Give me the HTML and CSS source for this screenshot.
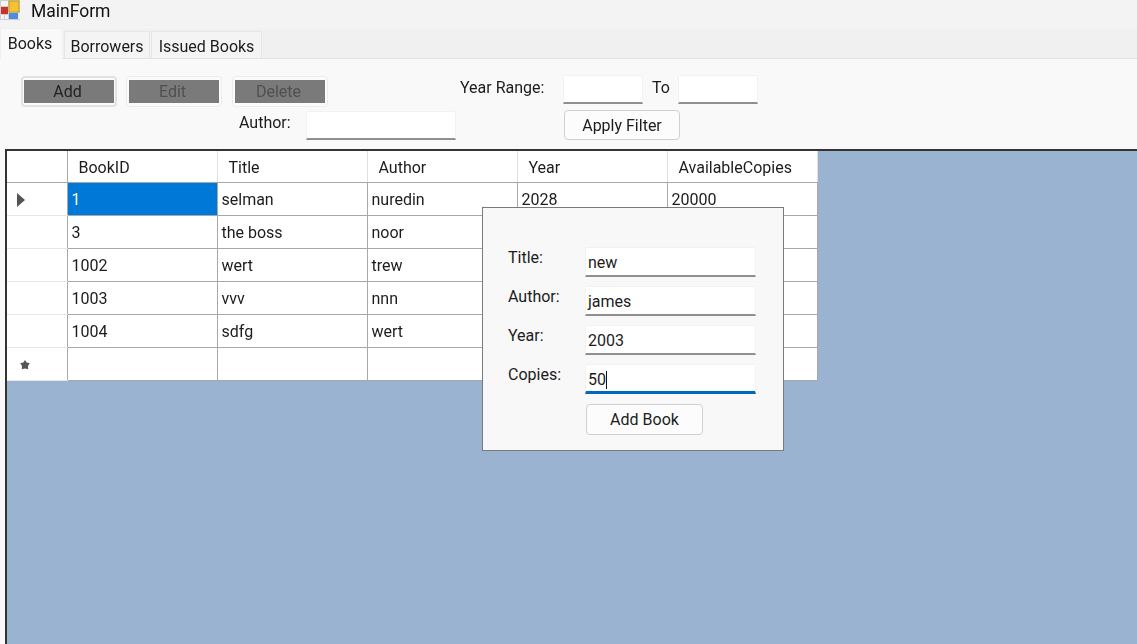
FILE: index.html
```html
<!DOCTYPE html>
<html lang="en">
<head>
  <meta charset="UTF-8" />
  <title>MainForm</title>
  <link rel="stylesheet" href="styles.css">
</head>
<body>
  <div class="titlebar">
    <svg class="app-icon" width="20" height="20" viewBox="0 0 20 20">
      <rect x="0" y="0" width="20" height="20" fill="#cfcfcf"/>
      <rect x="1" y="1" width="7" height="5" fill="#f4f4f4"/>
      <rect x="9" y="1" width="10" height="11" fill="#f6c22e" stroke="#c49a34" stroke-width="1"/>
      <rect x="1" y="7" width="7" height="7" fill="#c9322c"/>
      <rect x="9" y="13" width="9" height="6" fill="#4f8be0"/>
      <rect x="1" y="15" width="3" height="4" fill="#f4f4f4"/>
      <rect x="5" y="15" width="3" height="4" fill="#f4f4f4"/>
      <rect x="18" y="13" width="2" height="6" fill="#eeeeee"/>
    </svg>
    <span class="title-text">MainForm</span>
  </div>

  <div class="tabstrip">
    <div class="tab tab-active">Books</div>
    <div class="tab tab-borrowers">Borrowers</div>
    <div class="tab tab-issued">Issued Books</div>
  </div>

  <div class="toolbar">
    <div class="left-tools">
      <div class="action-row">
        <button class="action-btn action-default"><span>Add</span></button>
        <button class="action-btn"><span class="dim">Edit</span></button>
        <button class="action-btn"><span class="dim">Delete</span></button>
      </div>
      <div class="author-row">
        <label class="filter-label">Author:</label>
        <div class="field field-author"></div>
      </div>
    </div>
    <div class="right-tools">
      <div class="year-row">
        <label class="filter-label">Year Range:</label>
        <div class="field field-year"></div>
        <label class="filter-label to-label">To</label>
        <div class="field field-year"></div>
      </div>
      <button class="plain-btn apply-btn">Apply Filter</button>
    </div>
  </div>

  <div class="grid-area">
    <table class="books">
      <thead>
        <tr><th class="row-head"></th><th>BookID</th><th>Title</th><th>Author</th><th>Year</th><th>AvailableCopies</th></tr>
      </thead>
      <tbody>
        <tr>
          <td class="row-head"><svg width="8" height="14" viewBox="0 0 8 14"><path d="M0 0L8 7L0 14Z" fill="#555"/></svg></td>
          <td class="selected">1</td><td>selman</td><td>nuredin</td><td>2028</td><td>20000</td>
        </tr>
        <tr><td class="row-head"></td><td>3</td><td>the boss</td><td>noor</td><td></td><td></td></tr>
        <tr><td class="row-head"></td><td>1002</td><td>wert</td><td>trew</td><td></td><td></td></tr>
        <tr><td class="row-head"></td><td>1003</td><td>vvv</td><td>nnn</td><td></td><td></td></tr>
        <tr><td class="row-head"></td><td>1004</td><td>sdfg</td><td>wert</td><td></td><td></td></tr>
        <tr>
          <td class="row-head"><svg class="new-row" width="10" height="10" viewBox="0 0 9 9"><path d="M4.5 0L6 2.2L8.8 3L7.2 5.4L7.4 8.4L4.5 7.6L1.6 8.4L1.8 5.4L0.2 3L3 2.2Z" fill="#555"/></svg></td>
          <td></td><td></td><td></td><td></td><td></td>
        </tr>
      </tbody>
    </table>

    <div class="popup">
      <div class="popup-row">
        <label>Title:</label>
        <div class="field popup-field">new</div>
      </div>
      <div class="popup-row">
        <label>Author:</label>
        <div class="field popup-field">james</div>
      </div>
      <div class="popup-row">
        <label>Year:</label>
        <div class="field popup-field">2003</div>
      </div>
      <div class="popup-row">
        <label>Copies:</label>
        <div class="field popup-field focused">50<span class="caret"></span></div>
      </div>
      <button class="plain-btn add-book">Add Book</button>
    </div>
  </div>
</body>
</html>
```

FILE: styles.css
```css
* {
  box-sizing: border-box;
}
html, body {
  height: 100%;
}
body {
  margin: 0;
  background-color: #f9f9f9;
  color: #1c1c1c;
  font-family: Roboto, "Noto Sans", sans-serif;
  font-size: 16px;
  overflow: hidden;
  display: flex;
  flex-direction: column;
  filter: blur(0.35px);
}
button {
  font: inherit;
  color: inherit;
  padding: 0;
}

.titlebar {
  height: 29px;
  flex: none;
  background-color: #f3f3f3;
  display: flex;
  align-items: flex-start;
}
.app-icon {
  flex: none;
}
.title-text {
  margin-left: 11px;
  font-size: 17.5px;
  line-height: 22px;
  color: #111;
}

.tabstrip {
  height: 30px;
  flex: none;
  background-color: #f0f0f0;
  border-bottom: 1px solid #e2e2e2;
  display: flex;
  align-items: flex-end;
}
.tab {
  height: 27px;
  padding-top: 2px;
  line-height: 25px;
  text-align: center;
  background-color: #f4f4f4;
  border: 1px solid #e6e6e6;
  border-bottom: none;
}
.tab-active {
  height: 31px;
  width: 63px;
  margin-bottom: -1px;
  padding: 1px 3px 0 0;
  line-height: 27px;
  background-color: #f9f9f9;
  border-color: #f0f0f0;
}
.tab-borrowers {
  width: 86px;
  margin-left: 1px;
}
.tab-issued {
  width: 111px;
  margin-left: 1px;
}

.toolbar {
  height: 90px;
  flex: none;
  display: flex;
  padding: 16px 0 0 21px;
}
.left-tools {
  width: 439px;
}
.action-row {
  display: flex;
  gap: 9px;
  padding-top: 1px;
}
.action-btn {
  width: 96px;
  height: 31px;
  background-color: #fbfbfb;
  border: 1px solid #ececec;
  border-radius: 4px;
  padding: 3px 2px;
}
.action-btn + .action-btn + .action-btn {
  margin-left: 1px;
}
.action-default {
  border: 2px solid #e2e2e2;
  padding: 2px 1px;
}
.action-btn span {
  display: block;
  height: 100%;
  background-color: #7a7a7a;
  line-height: 23px;
  padding-right: 3px;
  color: #222;
}
.action-btn span.dim {
  color: #505050;
}
.author-row {
  display: flex;
  align-items: flex-start;
  margin-top: 4px;
  padding-left: 218px;
}
.author-row .filter-label {
  width: 67px;
  padding-top: 2px;
}
.filter-label {
  line-height: 20px;
}
.field {
  background-color: #fff;
  border: 1px solid #f2f2f2;
  border-bottom: 2px solid #8f8f8f;
  border-radius: 2px 2px 0 0;
}
.field-author {
  width: 150px;
  height: 29px;
}
.right-tools {
  display: flex;
  flex-direction: column;
  align-items: flex-start;
}
.year-row {
  display: flex;
  align-items: flex-start;
  height: 35px;
}
.year-row .filter-label {
  padding-top: 3px;
  width: 103px;
}
.year-row .to-label {
  width: 26px;
  margin-left: 9px;
}
.field-year {
  width: 80px;
  height: 29px;
}
.plain-btn {
  background-color: #fcfcfc;
  border: 1px solid #d0d0d0;
  border-radius: 4px;
}
.apply-btn {
  width: 116px;
  height: 30px;
  margin-left: 104px;
}

.grid-area {
  position: relative;
  flex: 1;
  margin-left: 5px;
  border-top: 2px solid #333;
  border-left: 2px solid #333;
  background-color: #9ab3d0;
  min-height: 0;
}
.books {
  border-collapse: collapse;
  table-layout: fixed;
  width: 810px;
  background-color: #fff;
}
.books th, .books td {
  border: 1px solid #a8a8a8;
  border-left: none;
  border-top: none;
  width: 150px;
  height: 33px;
  padding: 1px 0 0 4px;
  text-align: left;
  font-weight: normal;
  overflow: hidden;
  white-space: nowrap;
}
.books th {
  height: 31px;
  padding: 2px 0 0 11px;
  border-right-color: #e0e0e0;
}
.books .row-head {
  width: 60px;
  border-bottom-color: #e6e6e6;
  border-right-color: #a8a8a8;
  padding: 2px 0 0 10px;
  vertical-align: middle;
}
.books th.row-head {
  border-bottom-color: #a8a8a8;
}
.books svg {
  display: block;
}
.books svg.new-row {
  margin-left: 3px;
}
.books td.selected {
  background-color: #0078d7;
  color: #fff;
}

.popup {
  position: absolute;
  left: 475px;
  top: 56px;
  width: 302px;
  height: 244px;
  background-color: #f8f8f8;
  border: 1px solid #7a7a7a;
  padding: 39px 0 0 25px;
  display: flex;
  flex-direction: column;
}
.popup-row {
  display: flex;
  align-items: flex-start;
  height: 39px;
}
.popup-row label {
  width: 77px;
  padding-top: 1px;
  line-height: 20px;
}
.popup-field {
  width: 171px;
  height: 30px;
  line-height: 30px;
  padding-left: 2px;
}
.focused {
  border-bottom: 3px solid #0067c0;
  background-color: #fff;
}
.caret {
  display: inline-block;
  width: 1px;
  height: 18px;
  background-color: #111;
  vertical-align: -4px;
}
.add-book {
  width: 117px;
  height: 31px;
  margin-left: 78px;
  margin-top: 1px;
}
```
